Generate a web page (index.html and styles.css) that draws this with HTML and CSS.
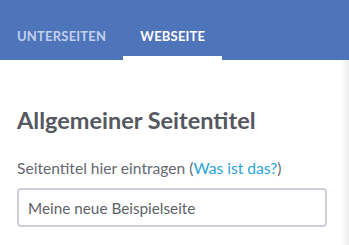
FILE: index.html
```html
<!DOCTYPE html>
<html lang="de">
<head>
<meta charset="utf-8">
<link rel="stylesheet" href="styles.css">
</head>
<body>
<div class="page">
  <nav class="tabs">
    <a class="tab">UNTERSEITEN</a>
    <a class="tab active">WEBSEITE</a>
  </nav>
  <main class="content">
    <h2 class="title">Allgemeiner Seitentitel</h2>
    <label class="label">Seitentitel hier eintragen (<a class="link">Was ist das?</a>)</label>
    <div class="input">Meine neue Beispielseite</div>
  </main>
  <div class="edge"></div>
</div>
</body>
</html>
```

FILE: styles.css
```css
html, body {
  margin: 0;
  padding: 0;
  background: #ffffff;
}
body {
  font-family: Lato, "Noto Sans", sans-serif;
  width: 349px;
  height: 245px;
  overflow: hidden;
}
.page {
  position: relative;
  height: 245px;
}
.tabs {
  display: flex;
  align-items: flex-end;
  height: 60px;
  background: #4e74ba;
}
.tab {
  display: block;
  padding: 0 17px;
  height: 60px;
  box-sizing: border-box;
  padding-top: 28px;
  font-size: 13px;
  font-weight: 700;
  letter-spacing: 0.2px;
  color: #c3d0ec;
  border-bottom: 4px solid transparent;
}
.tab.active {
  color: #ffffff;
  border-bottom-color: #ffffff;
}
.content {
  padding: 0 22px 0 17px;
}
.title {
  margin: 0;
  padding-top: 46px;
  font-size: 23.5px;
  line-height: 28px;
  font-weight: 700;
  color: #56585f;
}
.label {
  display: block;
  margin-top: 25px;
  font-size: 15.6px;
  line-height: 18px;
  color: #666870;
}
.link {
  color: #2aa3dc;
}
.input {
  margin-top: 11px;
  height: 39px;
  box-sizing: border-box;
  border: 2px solid #cdd0dc;
  border-radius: 4px;
  padding: 0 9px;
  display: flex;
  align-items: center;
  font-size: 15.3px;
  color: #5d5f67;
}
.edge {
  position: absolute;
  right: 0;
  top: 60px;
  bottom: 0;
  width: 8px;
  background: linear-gradient(to right, rgba(240,240,240,0), #ececec);
}
```
